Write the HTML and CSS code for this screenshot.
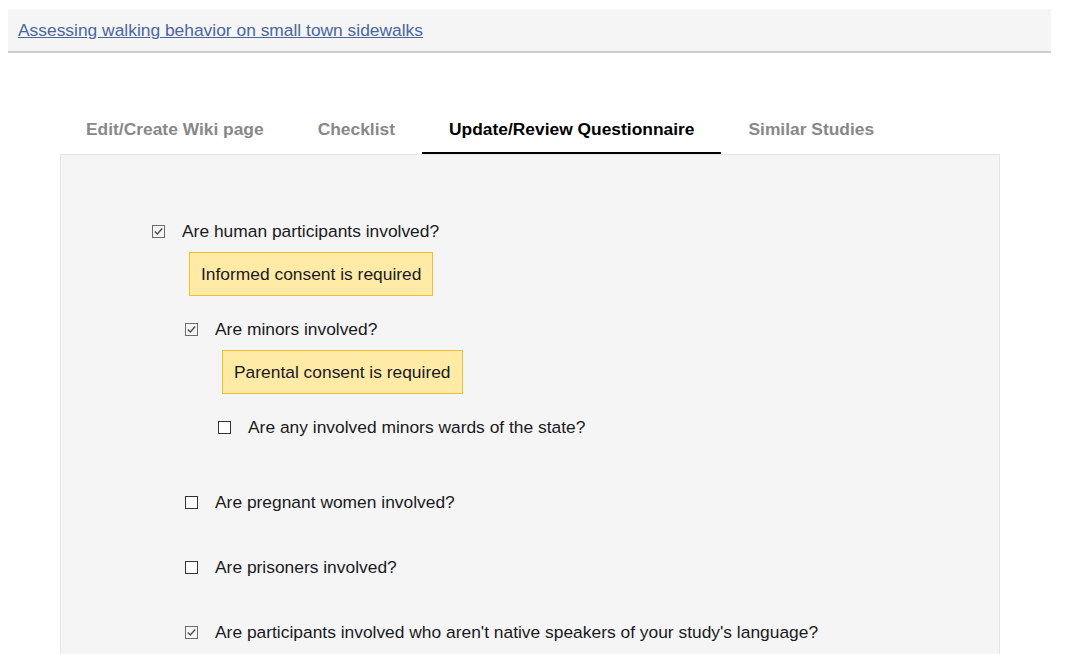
FILE: index.html
```html
<!DOCTYPE html>
<html lang="en">
<head>
<meta charset="utf-8">
<title>Questionnaire</title>
<link rel="stylesheet" href="styles.css">
</head>
<body>
<header class="study-header">
  <a class="study-link" href="#">Assessing walking behavior on small town sidewalks</a>
</header>

<main class="workspace">
  <nav class="tabs">
    <a class="tab" href="#">Edit/Create Wiki page</a>
    <a class="tab" href="#">Checklist</a>
    <a class="tab tab-active" href="#">Update/Review Questionnaire</a>
    <a class="tab" href="#">Similar Studies</a>
  </nav>

  <section class="panel">
    <div class="q-list">
      <div class="q">
        <label class="q-row">
          <span class="cb cb-checked"><svg viewBox="0 0 13 13" width="13" height="13"><rect x="0.5" y="0.5" width="12" height="12" fill="none" stroke="#6b6b6b"/><path d="M2.8 6.4 L5.3 8.9 L10.2 3.6" fill="none" stroke="#4d4d4d" stroke-width="1.4"/></svg></span>
          <span class="q-text">Are human participants involved?</span>
        </label>
        <div class="alert">Informed consent is required</div>
        <div class="q-list children">
          <div class="q">
            <label class="q-row">
              <span class="cb cb-checked"><svg viewBox="0 0 13 13" width="13" height="13"><rect x="0.5" y="0.5" width="12" height="12" fill="none" stroke="#6b6b6b"/><path d="M2.8 6.4 L5.3 8.9 L10.2 3.6" fill="none" stroke="#4d4d4d" stroke-width="1.4"/></svg></span>
              <span class="q-text">Are minors involved?</span>
            </label>
            <div class="alert">Parental consent is required</div>
            <div class="q-list children children-end">
              <div class="q">
                <label class="q-row">
                  <span class="cb"><svg viewBox="0 0 13 13" width="13" height="13"><rect x="0.5" y="0.5" width="12" height="12" fill="#fff" stroke="#333"/></svg></span>
                  <span class="q-text">Are any involved minors wards of the state?</span>
                </label>
              </div>
            </div>
          </div>
          <div class="q">
            <label class="q-row">
              <span class="cb"><svg viewBox="0 0 13 13" width="13" height="13"><rect x="0.5" y="0.5" width="12" height="12" fill="#fff" stroke="#333"/></svg></span>
              <span class="q-text">Are pregnant women involved?</span>
            </label>
          </div>
          <div class="q">
            <label class="q-row">
              <span class="cb"><svg viewBox="0 0 13 13" width="13" height="13"><rect x="0.5" y="0.5" width="12" height="12" fill="#fff" stroke="#333"/></svg></span>
              <span class="q-text">Are prisoners involved?</span>
            </label>
          </div>
          <div class="q">
            <label class="q-row">
              <span class="cb cb-checked"><svg viewBox="0 0 13 13" width="13" height="13"><rect x="0.5" y="0.5" width="12" height="12" fill="none" stroke="#6b6b6b"/><path d="M2.8 6.4 L5.3 8.9 L10.2 3.6" fill="none" stroke="#4d4d4d" stroke-width="1.4"/></svg></span>
              <span class="q-text">Are participants involved who aren't native speakers of your study's language?</span>
            </label>
          </div>
        </div>
      </div>
    </div>
  </section>
</main>
</body>
</html>
```

FILE: styles.css
```css
* {
  box-sizing: border-box;
}

html, body {
  margin: 0;
  padding: 0;
  background: #ffffff;
  font-family: "Liberation Sans", Arial, sans-serif;
  font-size: 17.4px;
  color: #1a1a1f;
  overflow: hidden;
}

.study-header {
  margin: 9px 15px 0 8px;
  padding: 12px 10px;
  background: #f5f5f5;
  border-bottom: 2px solid #cccccc;
  line-height: 18px;
}

.study-link {
  color: #4a66a0;
  text-decoration: underline;
}

.workspace {
  margin: 53px 0 0 59px;
  width: 941px;
}

.tabs {
  display: flex;
}

.tab {
  display: block;
  padding: 14px 27px;
  line-height: 18px;
  font-weight: bold;
  color: #888888;
  text-decoration: none;
  border-bottom: 2px solid transparent;
}

.tab-active {
  color: #000000;
  border-bottom-color: #000000;
}

.panel {
  margin-left: 1px;
  background: #f5f5f5;
  border: 1px solid #e6e6e6;
  min-height: 520px;
  padding: 66px 0 0 91px;
}

.q-list {
  display: flex;
  flex-direction: column;
  gap: 45px;
}

.q {
  display: flex;
  flex-direction: column;
  align-items: flex-start;
}

.q-row {
  display: flex;
  align-items: center;
  height: 20px;
  line-height: 20px;
}

.cb {
  display: block;
  width: 13px;
  height: 13px;
  margin-right: 17px;
}

.cb svg {
  display: block;
}

.alert {
  margin: 11px 0 0 37px;
  padding: 12px 11px;
  line-height: 18px;
  background: #ffeba6;
  border: 1px solid #f0c030;
}

.children {
  margin: 23px 0 0 33px;
  align-self: stretch;
}

.children-end {
  padding-bottom: 10px;
}
```
